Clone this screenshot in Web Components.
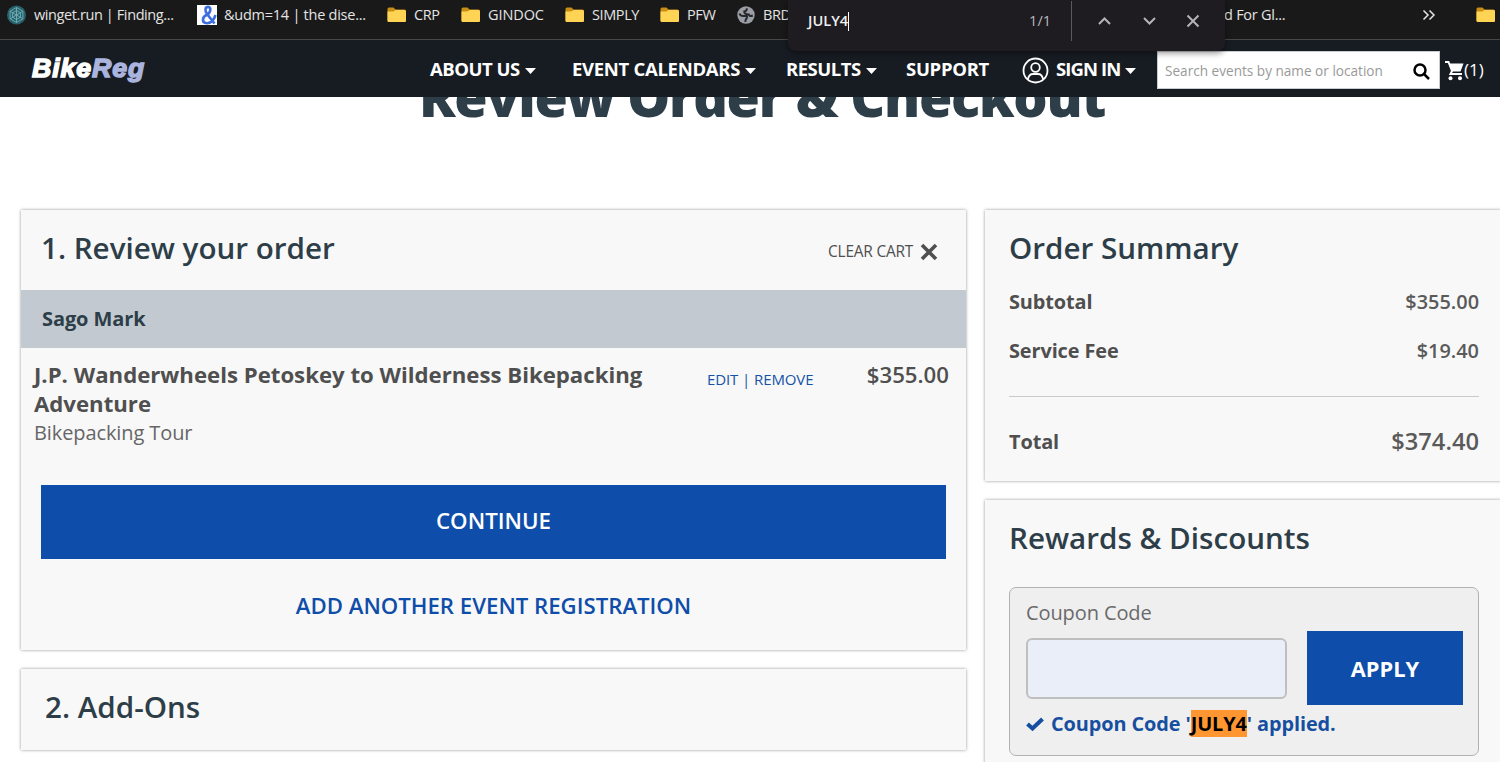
<!DOCTYPE html>
<html lang="en">
<head>
<meta charset="utf-8">
<title>BikeReg - Review Order &amp; Checkout</title>
<style>
  html, body { margin: 0; height: 100%; overflow: hidden; background: #fff; }
  body { font-family: "Open Sans", "Noto Sans", sans-serif; color: #4f4f4f; }
</style>
</head>
<body>
<checkout-page></checkout-page>

<script>
const folderIcon = `
  <svg width="20" height="16" viewBox="0 0 20 16">
    <path d="M0.5 2 Q0.5 0.5 2 0.5 H6.5 L8.5 2.5 H17.5 Q19 2.5 19 4 V13.5 Q19 15 17.5 15 H2 Q0.5 15 0.5 13.5Z" fill="#c98f14"/>
    <path d="M0.5 4.5 H6.5 L8.5 3 H17.5 Q19 3 19 4.5 V13.5 Q19 15 17.5 15 H2 Q0.5 15 0.5 13.5Z" fill="#ffd455"/>
  </svg>`;

const icons = {
  folder: folderIcon,
  winget: `
    <svg width="20" height="20" viewBox="0 0 20 20" fill="none">
      <circle cx="9.5" cy="10" r="9.5" fill="#27616b"/>
      <path d="M9.5 2.5 L15.9 6.2 V13.8 L9.5 17.5 L3.1 13.8 V6.2Z M9.5 5.5 L13.4 7.8 V12.3 L9.5 14.5 L5.6 12.3 V7.8Z M3.1 6.2 L15.9 13.8 M15.9 6.2 L3.1 13.8 M9.5 2.5 V17.5" stroke="#73b0b7" stroke-width=".9"/>
    </svg>`,
  amp: `
    <svg width="20" height="20" viewBox="0 0 20 20">
      <rect width="20" height="20" fill="#fff"/>
      <path d="M18.5 10 C16.5 16.5 13 18.3 9.8 18.2 C4.5 18 5 12 9.5 10 C14 8 14.5 2 11.3 1.9 C8 1.9 7.6 5.5 10 9 L17.5 18.5" fill="none" stroke="#3d6fe0" stroke-width="2.6"/>
    </svg>`,
  globe: `
    <svg width="18" height="18" viewBox="0 0 18 18">
      <circle cx="9" cy="9" r="8.7" fill="#9b9fa5"/>
      <path d="M2.5 7.5 Q3.5 10.5 7.5 10 Q11 9.5 9.8 12 Q8.5 13 8.3 16 M15.8 9.5 Q12.5 11 11.8 8.5 Q7 8.3 7.3 5.5 Q9.5 5.5 10 2.3" fill="none" stroke="#24272b" stroke-width="2"/>
    </svg>`
};

class BookmarkItem extends HTMLElement {
  constructor() {
    super();
    this.attachShadow({ mode: 'open' });
  }

  connectedCallback() {
    this.shadowRoot.innerHTML = `
      <style>
        :host {
          display: flex;
          flex: none;
          align-items: center;
          gap: 7px;
          width: var(--w);
          height: 30px;
          font-size: 14.5px;
          letter-spacing: var(--ls, -0.4px);
          white-space: nowrap;
          color: #e4e4e4;
        }
        svg { display: block; flex: none; }
        span { padding-bottom: 2px; }
      </style>
      ${icons[this.getAttribute('icon')] || ''}
      <span><slot></slot></span>
    `;
  }
}

class FindBar extends HTMLElement {
  constructor() {
    super();
    this.attachShadow({ mode: 'open' });
  }

  connectedCallback() {
    this.shadowRoot.innerHTML = `
      <style>
        :host {
          position: absolute;
          left: 788px;
          top: 0;
          z-index: 5;
          box-sizing: border-box;
          display: flex;
          align-items: center;
          width: 437px;
          height: 51px;
          padding: 0 25px 9px 20px;
          border-radius: 0 0 8px 8px;
          background: #1e1c20;
          box-shadow: 0 2px 6px rgba(0, 0, 0, 0.45);
          color: #f0f0f2;
        }
        .query {
          display: flex;
          align-items: center;
          flex: 1;
          font-size: 14.6px;
          font-weight: 600;
        }
        .query span, .count { padding-bottom: 2px; }
        .query::after { content: ''; width: 1px; height: 19px; background: #fff; }
        .count { font-size: 14.5px; color: #b9b9bd; }
        .line { width: 1px; height: 40px; margin: 0 25px 0 20px; background: #5a595d; }
        svg { display: block; fill: none; stroke: #b4b4b8; stroke-width: 2; }
        .arrows { display: flex; gap: 30px; margin-right: 29px; }
      </style>
      <span class="query"><span>JULY4</span></span>
      <span class="count">1/1</span>
      <span class="line"></span>
      <span class="arrows">
        <svg width="15" height="10" viewBox="0 0 15 10"><path d="M2 8 L7.5 2.5 L13 8"/></svg>
        <svg width="15" height="10" viewBox="0 0 15 10"><path d="M2 2 L7.5 7.5 L13 2"/></svg>
      </span>
      <svg width="14" height="14" viewBox="0 0 14 14"><path d="M1.5 1.5 L12.5 12.5 M12.5 1.5 L1.5 12.5"/></svg>
    `;
  }
}

class BookmarkBar extends HTMLElement {
  constructor() {
    super();
    this.attachShadow({ mode: 'open' });
  }

  connectedCallback() {
    this.shadowRoot.innerHTML = `
      <style>
        :host {
          box-sizing: border-box;
          display: flex;
          align-items: flex-start;
          height: 40px;
          padding-left: 7px;
          background: #191919;
          border-bottom: 1px solid #4a4747;
          overflow: hidden;
        }
        .more { flex: none; width: 54px; height: 30px; display: flex; align-items: center; }
      </style>
      <bookmark-item icon="winget" style="--w: 190px">winget.run | Finding...</bookmark-item>
      <bookmark-item icon="amp" style="--w: 190px; --ls: -0.25px">&amp;udm=14 | the dise...</bookmark-item>
      <bookmark-item icon="folder" style="--w: 74px">CRP</bookmark-item>
      <bookmark-item icon="folder" style="--w: 104px; --ls: -0.1px">GINDOC</bookmark-item>
      <bookmark-item icon="folder" style="--w: 95px">SIMPLY</bookmark-item>
      <bookmark-item icon="folder" style="--w: 77px">PFW</bookmark-item>
      <bookmark-item icon="globe" style="--w: 487px">&hairsp;BRD</bookmark-item>
      <bookmark-item style="--w: 198px; --ls: -0.25px">d For Gl...</bookmark-item>
      <span class="more">
        <svg width="14" height="12" viewBox="0 0 14 12" fill="none" stroke="#e4e4e4" stroke-width="1.5"><path d="M1.5 1.5 L6 6 L1.5 10.5 M7.5 1.5 L12 6 L7.5 10.5"/></svg>
      </span>
      <bookmark-item icon="folder" style="--w: 24px"></bookmark-item>
    `;
  }
}

class NavLink extends HTMLElement {
  constructor() {
    super();
    this.attachShadow({ mode: 'open' });
  }

  connectedCallback() {
    const caret = this.hasAttribute('caret')
      ? '<svg width="11" height="6" viewBox="0 0 11 6"><path d="M0 0 H11 L5.5 6Z" fill="#fff"/></svg>'
      : '';
    this.shadowRoot.innerHTML = `
      <style>
        :host {
          display: flex;
          align-items: center;
          gap: 5px;
          flex: none;
          width: var(--w);
          font-size: 18.5px;
          font-weight: 700;
          letter-spacing: var(--ls, -0.5px);
          white-space: nowrap;
          color: #fff;
        }
        span { padding-bottom: 2px; }
        svg { margin-top: 2px; }
      </style>
      <slot name="icon"></slot>
      <span><slot></slot></span>
      ${caret}
    `;
  }
}

class SiteNav extends HTMLElement {
  constructor() {
    super();
    this.attachShadow({ mode: 'open' });
  }

  connectedCallback() {
    this.shadowRoot.innerHTML = `
      <style>
        :host {
          box-sizing: border-box;
          display: flex;
          align-items: center;
          height: 57px;
          padding: 2px 0 0 32px;
          background: #171c23;
        }
        .logo {
          flex: none;
          width: 398px;
          padding-bottom: 4px;
          font: italic 700 26.7px/30px "Liberation Sans", Arial, sans-serif;
          letter-spacing: 0.9px;
          color: #fff;
          -webkit-text-stroke: 1.5px currentColor;
        }
        .logo b { color: #aab4de; }
        .search {
          box-sizing: border-box;
          display: flex;
          flex: none;
          align-items: center;
          justify-content: space-between;
          width: 283px;
          height: 38px;
          padding: 0 9px 0 7px;
          margin-right: 5px;
          background: #fff;
          border: 1px solid #c9cdd2;
          font-size: 13.6px;
          color: #999;
        }
        .search span { padding-top: 1px; }
        .search svg { margin-top: 3px; }
        .cart { display: flex; align-items: center; font-size: 17px; color: #fff; }
        .cart svg { margin-top: 3px; }
      </style>
      <div class="logo">Bike<b>Reg</b></div>
      <nav-link caret style="--w: 142px">ABOUT US</nav-link>
      <nav-link caret style="--w: 214px; --ls: -0.3px">EVENT CALENDARS</nav-link>
      <nav-link caret style="--w: 120px">RESULTS</nav-link>
      <nav-link style="--w: 116px; --ls: -0.3px">SUPPORT</nav-link>
      <nav-link caret style="--w: 135px; --ls: -0.9px">
        <svg slot="icon" width="27" height="27" viewBox="0 0 27 27" fill="none" stroke="#fff" stroke-width="1.8" style="margin: 2px 2px 0 0">
          <circle cx="13.5" cy="13.5" r="12"/>
          <circle cx="13.5" cy="10.5" r="4.3"/>
          <path d="M6 22 Q7 17 11 17 H16 Q20 17 21 22"/>
        </svg>SIGN IN</nav-link>
      <div class="search">
        <span>Search events by name or location</span>
        <svg width="17" height="17" viewBox="0 0 17 17" fill="none" stroke="#000" stroke-width="2.5"><circle cx="7" cy="7" r="5.5"/><path d="M11 11 L16 16"/></svg>
      </div>
      <div class="cart">
        <svg width="19" height="20" viewBox="0 0 19 20">
          <path d="M0 1 H3.5 L7 10 L5.5 13 H17" fill="none" stroke="#fff" stroke-width="2"/>
          <path d="M4 2.5 H18.5 L15.5 10.5 H7Z" fill="#fff"/>
          <circle cx="5.5" cy="17.2" r="2" fill="#fff"/><circle cx="15" cy="17.2" r="2" fill="#fff"/>
        </svg>
        <span>(1)</span>
      </div>
    `;
  }
}

class PanelCard extends HTMLElement {
  constructor() {
    super();
    this.attachShadow({ mode: 'open' });
  }

  connectedCallback() {
    this.shadowRoot.innerHTML = `
      <style>
        :host {
          display: block;
          flex: none;
          box-sizing: border-box;
          background: #f8f8f8;
          box-shadow: 0 0 3px rgba(0, 0, 0, 0.42);
        }
        header {
          box-sizing: border-box;
          display: flex;
          align-items: center;
          justify-content: space-between;
          height: 80px;
          padding: 0 28px 4px var(--pad, 20px);
        }
        h2 {
          margin: 0;
          font-size: 29.6px;
          font-weight: 600;
          line-height: 40px;
          color: #2d3e49;
          white-space: nowrap;
        }
      </style>
      <header><h2>${this.getAttribute('heading')}</h2><slot name="action"></slot></header>
      <slot></slot>
    `;
  }
}

class BlueButton extends HTMLElement {
  constructor() {
    super();
    this.attachShadow({ mode: 'open' });
  }

  connectedCallback() {
    this.shadowRoot.innerHTML = `
      <style>
        :host {
          box-sizing: border-box;
          display: flex;
          align-items: center;
          justify-content: center;
          height: 74px;
          padding-bottom: var(--lift, 4px);
          background: #0e4da9;
          color: #fff;
          font-size: 22.3px;
          font-weight: 600;
        }
      </style>
      <span><slot></slot></span>
    `;
  }
}

class OrderReview extends HTMLElement {
  constructor() {
    super();
    this.attachShadow({ mode: 'open' });
  }

  connectedCallback() {
    this.shadowRoot.innerHTML = `
      <style>
        :host { display: block; }
        panel-card { height: 440px; }
        .clear {
          display: flex;
          align-items: center;
          gap: 7px;
          padding-top: 7px;
          font-size: 15.4px;
          letter-spacing: -0.2px;
        }
        .person {
          height: 58px;
          padding-left: 21px;
          background: #c2c9d0;
          font-size: 20px;
          font-weight: 700;
          letter-spacing: -0.1px;
          line-height: 58px;
          color: #2d3e49;
        }
        .item { display: flex; height: 137px; box-sizing: border-box; padding: 13px 17px 0 13px; line-height: 28.5px; }
        .name { width: 672px; }
        .name strong { display: block; width: 640px; font-size: 22.2px; }
        .name span { display: block; padding-top: 1px; font-size: 20px; letter-spacing: -0.1px; color: #666; }
        .links { flex: 1; padding: 4px 0 0 1px; font-size: 15px; letter-spacing: -0.1px; color: #1553a8; white-space: nowrap; }
        .price { font-size: 22.2px; font-weight: 600; }
        blue-button { margin: 0 20px; }
        .another { padding-top: 1px; text-align: center; font-size: 22.2px; font-weight: 600; line-height: 92px; color: #0e4da9; }
      </style>
      <panel-card heading="1. Review your order">
        <span class="clear" slot="action">CLEAR CART
          <svg width="18" height="18" viewBox="0 0 18 18" stroke="#4f4f4f" stroke-width="3.6"><path d="M2 2 L16 16 M16 2 L2 16"/></svg>
        </span>
        <div class="person">Sago Mark</div>
        <div class="item">
          <div class="name"><strong>J.P. Wanderwheels Petoskey to Wilderness Bikepacking Adventure</strong><span>Bikepacking Tour</span></div>
          <div class="links">EDIT | REMOVE</div>
          <div class="price">$355.00</div>
        </div>
        <blue-button>CONTINUE</blue-button>
        <div class="another">ADD ANOTHER EVENT REGISTRATION</div>
      </panel-card>
    `;
  }
}

class OrderSummary extends HTMLElement {
  constructor() {
    super();
    this.attachShadow({ mode: 'open' });
  }

  connectedCallback() {
    this.shadowRoot.innerHTML = `
      <style>
        :host { display: block; }
        panel-card { height: 271px; --pad: 24px; }
        .rows { margin: -13px 22px 0 24px; font-size: 19.9px; }
        .row { display: flex; justify-content: space-between; align-items: center; height: 49px; }
        .row b { font-weight: 700; letter-spacing: -0.1px; }
        .row span { font-weight: 600; color: #5a5a5a; }
        .total { height: 88px; border-top: 1px solid #c9c9c9; margin-top: 21px; }
        .total span { font-size: 23.7px; }
      </style>
      <panel-card heading="Order Summary">
        <div class="rows">
          <div class="row"><b>Subtotal</b><span>$355.00</span></div>
          <div class="row"><b>Service Fee</b><span>$19.40</span></div>
          <div class="row total"><b>Total</b><span>$374.40</span></div>
        </div>
      </panel-card>
    `;
  }
}

class RewardsPanel extends HTMLElement {
  constructor() {
    super();
    this.attachShadow({ mode: 'open' });
  }

  connectedCallback() {
    this.shadowRoot.innerHTML = `
      <style>
        :host { display: block; }
        panel-card { height: 300px; --pad: 24px; }
        .coupon {
          box-sizing: border-box;
          height: 169px;
          margin: 7px 22px 0 24px;
          padding: 8px 15px 0 16px;
          border: 1px solid #b2b2b2;
          border-radius: 7px;
          background: #efefef;
        }
        label { display: block; padding-bottom: 1px; font-size: 20px; line-height: 34px; letter-spacing: -0.1px; color: #6a6a6a; }
        .entry { display: flex; align-items: center; justify-content: space-between; }
        .field {
          box-sizing: border-box;
          width: 261px;
          height: 61px;
          border: 2px solid #bfbfbf;
          border-radius: 6px;
          background: #eaeef8;
        }
        blue-button { width: 156px; font-weight: 700; font-size: 21.8px; --lift: 0; }
        .applied { display: flex; align-items: center; gap: 7px; padding-top: 5px; font-size: 19.9px; font-weight: 700; letter-spacing: -0.1px; color: #174fa0; white-space: pre; }
        mark { background: #ff9632; color: #000; }
      </style>
      <panel-card heading="Rewards &amp;amp; Discounts">
        <div class="coupon">
          <label>Coupon Code</label>
          <div class="entry"><div class="field"></div><blue-button>APPLY</blue-button></div>
          <div class="applied"><svg width="18" height="14" viewBox="0 0 18 14" fill="none" stroke="#174fa0" stroke-width="4"><path d="M1.5 7 L6.5 11.5 L16.5 2"/></svg><span>Coupon Code '<mark>JULY4</mark>' applied.</span></div>
        </div>
      </panel-card>
    `;
  }
}

class CheckoutPage extends HTMLElement {
  constructor() {
    super();
    this.attachShadow({ mode: 'open' });
  }

  connectedCallback() {
    this.shadowRoot.innerHTML = `
      <style>
        :host { display: block; position: relative; width: 1500px; height: 762px; overflow: hidden; }
        /* the title is scrolled half way under the nav */
        .hero { height: 113px; overflow: hidden; }
        h1 {
          margin: -38px 0 0 24px;
          text-align: center;
          font-size: 54px;
          font-weight: 800;
          line-height: 74px;
          letter-spacing: -1.25px;
          color: #2d3e49;
          white-space: nowrap;
        }
        main { display: flex; gap: 19px; padding-left: 21px; }
        .left { flex: none; width: 945px; display: flex; flex-direction: column; gap: 19px; }
        .right { flex: none; width: 516px; display: flex; flex-direction: column; gap: 19px; }
        .addons { --pad: 24px; height: 81px; }
      </style>
      <bookmark-bar></bookmark-bar>
      <site-nav></site-nav>
      <find-bar></find-bar>
      <div class="hero"><h1>Review Order &amp; Checkout</h1></div>
      <main>
        <div class="left">
          <order-review></order-review>
          <panel-card class="addons" heading="2. Add-Ons"></panel-card>
        </div>
        <div class="right">
          <order-summary></order-summary>
          <rewards-panel></rewards-panel>
        </div>
      </main>
    `;
  }
}

customElements.define('bookmark-item', BookmarkItem);
customElements.define('find-bar', FindBar);
customElements.define('bookmark-bar', BookmarkBar);
customElements.define('nav-link', NavLink);
customElements.define('site-nav', SiteNav);
customElements.define('panel-card', PanelCard);
customElements.define('blue-button', BlueButton);
customElements.define('order-review', OrderReview);
customElements.define('order-summary', OrderSummary);
customElements.define('rewards-panel', RewardsPanel);
customElements.define('checkout-page', CheckoutPage);
</script>
</body>
</html>
